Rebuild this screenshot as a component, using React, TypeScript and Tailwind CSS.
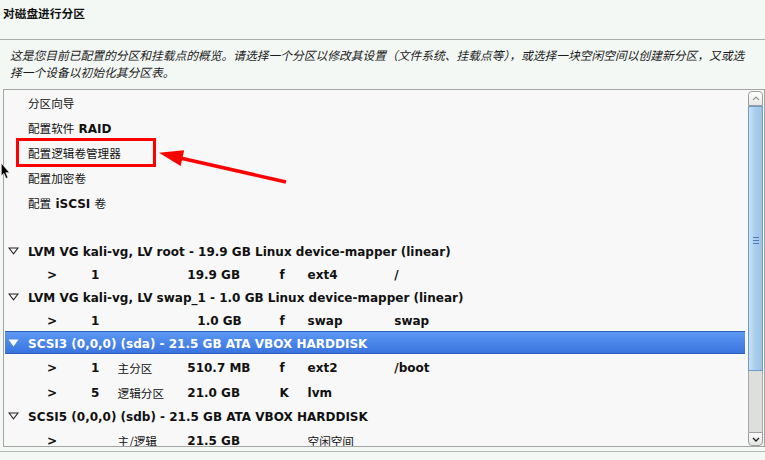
import React from "react";

const CJK = "font-['Noto_Sans_CJK_SC',sans-serif] font-normal text-[11.6px]";

function C({ children }: { children: React.ReactNode }) {
  return <span className={CJK}>{children}</span>;
}

function Tri({ white }: { white?: boolean }) {
  return (
    <svg width="11" height="8" viewBox="0 0 11 8" className="shrink-0 ml-[3px] mt-[2px]">
      {white ? (
        <polygon points="0.5,0.5 10.5,0.5 5.5,7.5" fill="#ffffff" />
      ) : (
        <polygon points="1,1 10,1 5.5,6.8" fill="none" stroke="#222" strokeWidth="1.1" />
      )}
    </svg>
  );
}

function Header({ text, selected }: { text: string; selected?: boolean }) {
  return (
    <div
      className={
        "flex h-[23px] items-center " +
        (selected
          ? "bg-gradient-to-b from-[#5c98f3] to-[#3a74df] border-y border-[#2d5fbf] text-white"
          : "text-[#111]")
      }
    >
      <Tri white={selected} />
      <span className="ml-[9px] pt-[3px] whitespace-nowrap">{text}</span>
    </div>
  );
}

function Sub({
  num,
  type,
  size,
  sizePad,
  flag,
  fs,
  mount,
  cjkRow,
}: {
  num?: string;
  type?: string;
  size: string;
  sizePad?: boolean;
  flag?: string;
  fs?: React.ReactNode;
  mount?: string;
  cjkRow?: boolean;
}) {
  return (
    <div className={"flex items-center pl-[42px] pt-[3px] text-[#111] whitespace-nowrap " + (cjkRow ? "h-[25px]" : "h-[23px]")}>
      <span className="w-[44px]">&gt;</span>
      <span className="w-[26.6px]">{num}</span>
      <span className="w-[69.7px]">{type ? <C>{type}</C> : null}</span>
      <span className={"w-[92.3px] " + (sizePad ? "pl-[10px]" : "")}>{size}</span>
      <span className="w-[28px]">{flag}</span>
      <span className="w-[86.7px]">{fs}</span>
      <span>{mount}</span>
    </div>
  );
}

function Item({ children }: { children: React.ReactNode }) {
  return (
    <div className="flex h-[25.2px] items-center pl-[23px] text-[#111] whitespace-pre">
      <span>{children}</span>
    </div>
  );
}

function Scrollbar() {
  return (
    <div className="ml-[3px] mr-[1px] mt-[1px] w-[15px] flex flex-col">
      <div className="h-[15px] rounded-t-[4px] border border-[#9c9e9c] bg-gradient-to-b from-[#ffffff] to-[#e6e8e6] flex items-center justify-center">
        <svg width="8" height="5" viewBox="0 0 8 5">
          <polyline points="1,4 4,1 7,4" fill="none" stroke="#9a9a9a" strokeWidth="1.2" />
        </svg>
      </div>
      <div className="h-[265px] border border-[#6d9ccc] bg-gradient-to-r from-[#c9e1f5] via-[#a9cdec] to-[#9cc3e6] flex items-center justify-center">
        <div className="flex flex-col gap-[2px] mt-[4px]">
          <div className="w-[6px] h-px bg-[#4d7cad]" />
          <div className="w-[6px] h-px bg-[#4d7cad]" />
          <div className="w-[6px] h-px bg-[#4d7cad]" />
        </div>
      </div>
      <div className="flex-1 bg-[#dcdfdc] border-x border-[#a9aba9]" />
      <div className="h-[14px] rounded-b-[4px] border border-[#9c9e9c] bg-gradient-to-b from-[#fafafa] to-[#e4e6e4] flex items-center justify-center">
        <svg width="8" height="5" viewBox="0 0 8 5">
          <polyline points="1,1 4,4 7,1" fill="none" stroke="#222" strokeWidth="1.4" />
        </svg>
      </div>
    </div>
  );
}

export default function App() {
  return (
    <div className="relative w-[765px] h-[460px] overflow-hidden bg-[#f4f8f5] font-['DejaVu_Sans',sans-serif] text-[12px] font-bold leading-[normal]">
      <div className="h-[40px] border-b border-[#a9aca9] pl-[3px] pt-[4px]">
        <span className="font-['Noto_Sans_CJK_SC',sans-serif] font-bold text-[11.7px] text-[#111]">对磁盘进行分区</span>
      </div>
      <div className="pl-[10px] pt-[6px] font-['Noto_Sans_CJK_SC',sans-serif] font-normal italic text-[11.75px] leading-[17px] text-[#1b1b1b] whitespace-nowrap">
        <div>这是您目前已配置的分区和挂载点的概览。请选择一个分区以修改其设置（文件系统、挂载点等），或选择一块空闲空间以创建新分区，又或选</div>
        <div>择一个设备以初始化其分区表。</div>
      </div>
      <div className="mt-[9px] ml-[3px] h-[358px] border border-[#a3a5a3] bg-[#f8f8f8] flex">
        <div className="flex-1 min-w-0 overflow-hidden pl-px">
          <Item>
            <C>分区向导</C>
          </Item>
          <Item>
            <C>配置软件</C>{" RAID"}
          </Item>
          <Item>
            <C>配置逻辑卷管理器</C>
          </Item>
          <Item>
            <C>配置加密卷</C>
          </Item>
          <Item>
            <C>配置</C>{" iSCSI "}<C>卷</C>
          </Item>
          <div className="h-[23px]" />
          <Header text="LVM VG kali-vg, LV root - 19.9 GB Linux device-mapper (linear)" />
          <Sub num="1" size="19.9 GB" flag="f" fs="ext4" mount="/" />
          <Header text="LVM VG kali-vg, LV swap_1 - 1.0 GB Linux device-mapper (linear)" />
          <Sub num="1" size="1.0 GB" sizePad flag="f" fs="swap" mount="swap" />
          <Header text="SCSI3 (0,0,0) (sda) - 21.5 GB ATA VBOX HARDDISK" selected />
          <Sub num="1" type="主分区" size="510.7 MB" flag="f" fs="ext2" mount="/boot" cjkRow />
          <Sub num="5" type="逻辑分区" size="21.0 GB" flag="K" fs="lvm" cjkRow />
          <Header text="SCSI5 (0,0,0) (sdb) - 21.5 GB ATA VBOX HARDDISK" />
          <Sub type="主/逻辑" size="21.5 GB" fs={<C>空闲空间</C>} cjkRow />
        </div>
        <Scrollbar />
      </div>
      <div className="mt-[4px] h-px bg-[#b4b7b4]" />

      {/* annotation overlay */}
      <div className="absolute left-[16px] top-[138px] w-[140px] h-[29px] border-[3px] border-[#ff0000]" />
      <svg className="absolute left-0 top-0" width="765" height="460" viewBox="0 0 765 460">
        <line x1="286" y1="182" x2="178" y2="157.5" stroke="#ff0000" strokeWidth="3.6" />
        <polygon points="159,152.7 184.2,150.3 180.6,165.9" fill="#ff0000" />
      </svg>
      <svg className="absolute left-0 top-[163px]" width="11" height="17" viewBox="0 0 10 16">
        <polygon points="1,0 1,12 3.5,9.8 5.5,14.5 7.3,13.7 5.3,9.2 8.8,9.2" fill="#000" stroke="#fff" strokeWidth="0.6" />
      </svg>
    </div>
  );
}
